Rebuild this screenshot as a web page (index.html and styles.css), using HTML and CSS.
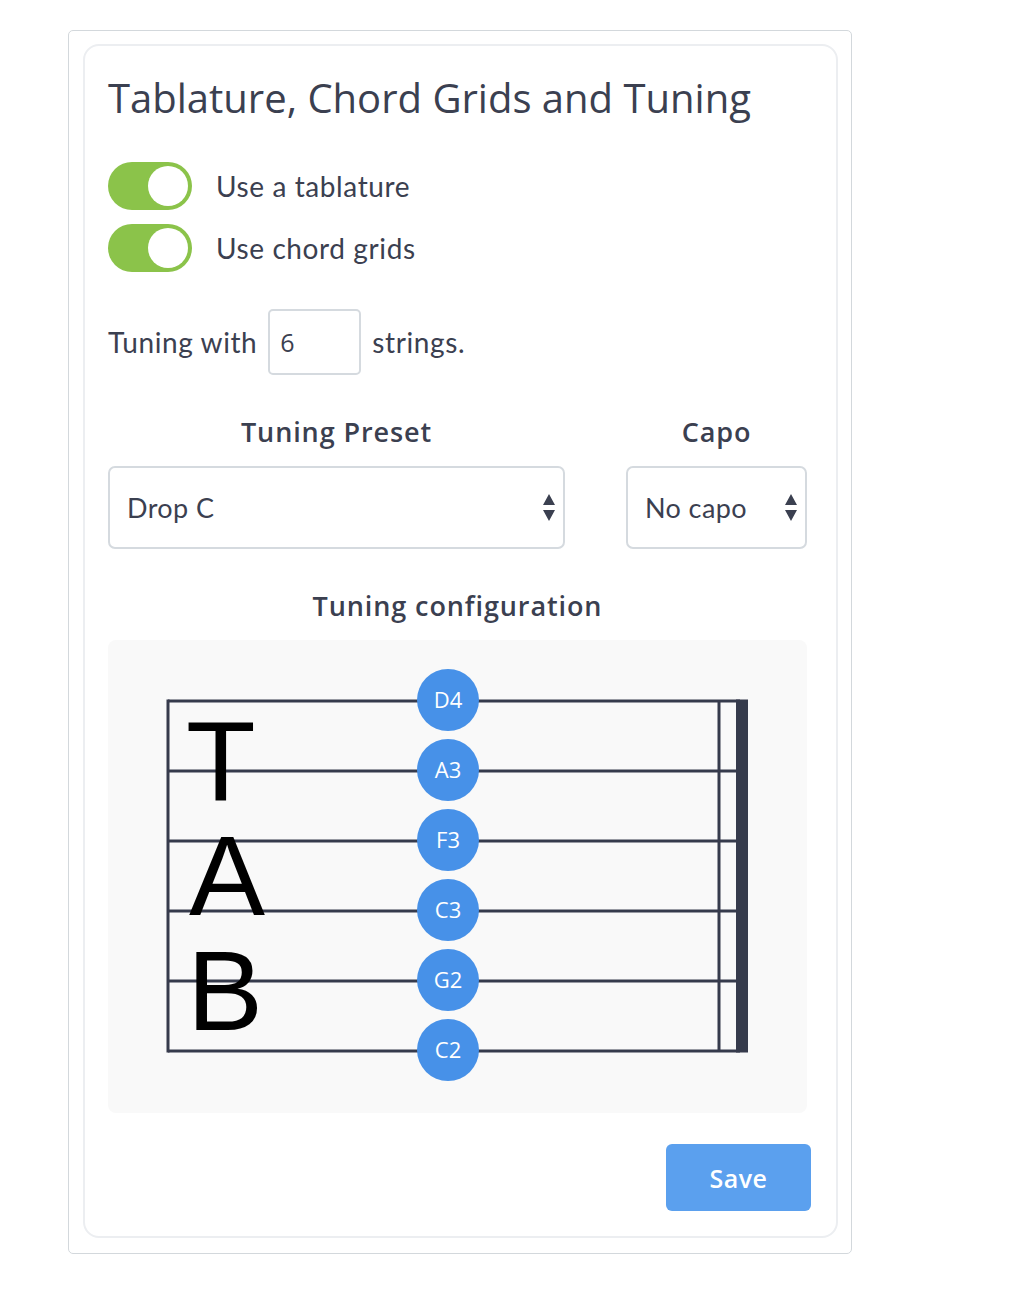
FILE: index.html
```html
<!DOCTYPE html>
<html lang="en">
<head>
<meta charset="utf-8">
<title>Tablature, Chord Grids and Tuning</title>
<link rel="stylesheet" href="styles.css">
</head>
<body>
<div class="frame">
  <div class="card">
    <h1 class="title">Tablature, Chord Grids and Tuning</h1>

    <div class="toggles">
      <label class="toggle-row">
        <span class="toggle"><span class="knob"></span></span>
        <span class="toggle-label">Use a tablature</span>
      </label>
      <label class="toggle-row">
        <span class="toggle"><span class="knob"></span></span>
        <span class="toggle-label">Use chord grids</span>
      </label>
    </div>

    <div class="strings-row">
      <span class="text">Tuning with</span>
      <span class="num-input">6</span>
      <span class="text">strings.</span>
    </div>

    <div class="selects">
      <div class="field field-preset">
        <div class="field-label">Tuning Preset</div>
        <div class="select">
          <span>Drop C</span>
          <svg class="arrows" width="12" height="27" viewBox="0 0 12 27"><path d="M6 0 L12 11 L0 11 Z M0 16 L12 16 L6 27 Z" fill="#3b4050"/></svg>
        </div>
      </div>
      <div class="field field-capo">
        <div class="field-label">Capo</div>
        <div class="select">
          <span>No capo</span>
          <svg class="arrows" width="12" height="27" viewBox="0 0 12 27"><path d="M6 0 L12 11 L0 11 Z M0 16 L12 16 L6 27 Z" fill="#3b4050"/></svg>
        </div>
      </div>
    </div>

    <div class="section-label">Tuning configuration</div>
    <div class="staff-box">
      <svg class="staff" width="699" height="473" viewBox="0 0 699 473">
        <g stroke="#363b4c" stroke-width="3" fill="none">
          <line x1="60" y1="61" x2="632" y2="61"/>
          <line x1="60" y1="131" x2="632" y2="131"/>
          <line x1="60" y1="201" x2="632" y2="201"/>
          <line x1="60" y1="271" x2="632" y2="271"/>
          <line x1="60" y1="341" x2="632" y2="341"/>
          <line x1="60" y1="411" x2="632" y2="411"/>
          <line x1="60" y1="59.5" x2="60" y2="412.5"/>
          <line x1="611" y1="61" x2="611" y2="411"/>
        </g>
        <rect x="628" y="59.5" width="12" height="353" fill="#363b4c"/>
        <g font-family="'Liberation Sans', Arial, sans-serif" font-size="114" fill="#000">
          <text x="78" y="160">T</text>
          <text x="81" y="275">A</text>
          <text x="79" y="390">B</text>
        </g>
        <g fill="#4791e8">
          <circle cx="340" cy="60" r="31"/>
          <circle cx="340" cy="130" r="31"/>
          <circle cx="340" cy="200" r="31"/>
          <circle cx="340" cy="270" r="31"/>
          <circle cx="340" cy="340" r="31"/>
          <circle cx="340" cy="410" r="31"/>
        </g>
        <g font-family="'Open Sans', sans-serif" font-size="22" fill="#fff" text-anchor="middle">
          <text x="340" y="68">D4</text>
          <text x="340" y="138">A3</text>
          <text x="340" y="208">F3</text>
          <text x="340" y="278">C3</text>
          <text x="340" y="348">G2</text>
          <text x="340" y="418">C2</text>
        </g>
      </svg>
    </div>

    <div class="actions">
      <button class="save" type="button">Save</button>
    </div>
  </div>
</div>
</body>
</html>
```

FILE: styles.css
```css
* { box-sizing: border-box; }

html, body {
  margin: 0;
  padding: 0;
  background: #ffffff;
}

body {
  font-family: "Lato", "Open Sans", sans-serif;
  color: #3b4050;
}

.frame {
  margin: 30px 0 0 68px;
  width: 784px;
  height: 1224px;
  border: 1px solid #d3d8dc;
  border-radius: 5px;
  padding: 13px 12px 14px 14px;
}

.card {
  width: 755px;
  height: 1194px;
  border: 2px solid #eceef1;
  border-radius: 16px;
  padding: 28px 29px 25px 23px;
  display: flex;
  flex-direction: column;
}

.title {
  margin: 0;
  font-family: "Open Sans", sans-serif;
  font-weight: 400;
  font-size: 40px;
  line-height: 48px;
  color: #3b4050;
}

.toggles {
  margin-top: 40px;
  display: flex;
  flex-direction: column;
  gap: 14px;
}

.toggle-row {
  display: flex;
  align-items: center;
  gap: 24px;
}

.toggle {
  width: 84px;
  height: 48px;
  border-radius: 24px;
  background: #8bc34a;
  padding: 4px;
  display: flex;
  justify-content: flex-end;
}

.knob {
  width: 40px;
  height: 40px;
  border-radius: 50%;
  background: #ffffff;
}

.toggle-label,
.text {
  font-size: 28px;
  letter-spacing: 0.6px;
  color: #3b4050;
}

.strings-row {
  margin-top: 37px;
  display: flex;
  align-items: center;
  gap: 11px;
}

.num-input {
  width: 93px;
  height: 66px;
  border: 2px solid #d5dadf;
  border-radius: 5px;
  display: flex;
  align-items: center;
  padding-left: 10px;
  font-family: "Open Sans", sans-serif;
  font-size: 25px;
  color: #3b4050;
}

.selects {
  margin-top: 40px;
  display: flex;
  gap: 61px;
}

.field {
  display: flex;
  flex-direction: column;
  gap: 17px;
}

.field-preset { width: 457px; }
.field-capo { width: 181px; }

.field-label,
.section-label {
  font-family: "Open Sans", sans-serif;
  font-weight: 600;
  font-size: 27px;
  line-height: 34px;
  letter-spacing: 0.9px;
  text-align: center;
  color: #3b4050;
}

.select {
  height: 83px;
  border: 2px solid #d5dadf;
  border-radius: 7px;
  display: flex;
  align-items: center;
  justify-content: space-between;
  padding: 0 8px 0 17px;
  font-size: 27px;
  letter-spacing: 0.4px;
  color: #3b4050;
}

.arrows { display: block; }

.section-label {
  margin-top: 40px;
  width: 699px;
}

.staff-box {
  margin-top: 17px;
  width: 699px;
  height: 473px;
  background: #f9f9f9;
  border-radius: 8px;
}

.staff { display: block; }

.actions {
  margin-top: 31px;
  display: flex;
  justify-content: flex-end;
  margin-right: -4px;
}

.save {
  width: 145px;
  height: 67px;
  border: none;
  border-radius: 6px;
  background: #5ba0ee;
  color: #ffffff;
  font-family: "Open Sans", sans-serif;
  font-weight: 600;
  font-size: 25px;
  letter-spacing: 0.5px;
  padding: 0;
}
```
